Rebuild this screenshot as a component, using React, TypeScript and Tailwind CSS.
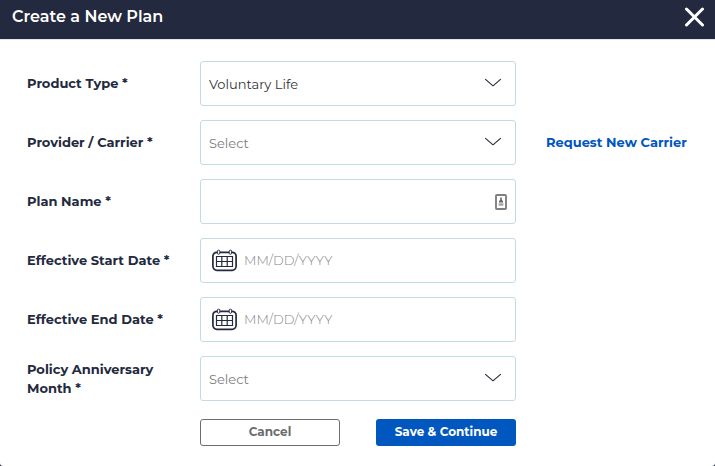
import type { ReactNode } from "react";

type RowProps = {
  id: string;
  label: string;
  children: ReactNode;
  action?: ReactNode;
};

const fieldClass =
  "h-[45px] w-full appearance-none rounded-[3px] border border-[#c3dbe3] bg-white text-[13px] outline-none focus:border-[#0057bf]";

function Row({ id, label, children, action }: RowProps) {
  return (
    <div className="grid grid-cols-[173px_minmax(0,1fr)_171px] items-center">
      <label htmlFor={id} className="pr-6 text-[13px] leading-[19px] font-bold text-[#23293e]">
        {label}
      </label>
      <div className="relative">{children}</div>
      {action && <div className="pl-[30px]">{action}</div>}
    </div>
  );
}

function Chevron() {
  return (
    <svg
      className="pointer-events-none absolute top-[17px] right-[14px] h-[9px] w-[18px]"
      viewBox="0 0 18 9"
      fill="none"
      stroke="#23293e"
      strokeWidth="1.1"
      strokeLinecap="round"
      strokeLinejoin="round"
    >
      <path d="M1.5 1.4 9 7.8l7.5-6.4" />
    </svg>
  );
}

function SelectField({ id, options, value }: { id: string; options: string[]; value?: string }) {
  return (
    <>
      <select
        id={id}
        defaultValue={value ?? ""}
        className={`${fieldClass} px-2 pt-0.5 pr-10 ${value ? "text-[#333333]" : "text-[#7c7c7c]"}`}
      >
        <option value="">Select</option>
        {options.map((option) => (
          <option key={option} value={option}>
            {option}
          </option>
        ))}
      </select>
      <Chevron />
    </>
  );
}

function DateField({ id }: { id: string }) {
  return (
    <>
      <svg
        className="pointer-events-none absolute top-[11px] left-[12px] h-[23px] w-[25px]"
        viewBox="0 0 25 23"
        fill="none"
        stroke="#23293e"
      >
        <rect x="0.9" y="3.3" width="23.2" height="18" rx="4" strokeWidth="1.7" />
        <path d="M4.5 7.5h16v10h-16zM9.8 7.5v10M15.2 7.5v10M4.5 12.5h16" strokeWidth="1.2" />
        <rect x="5.4" y="1.2" width="2.4" height="4" rx="1" fill="#fff" />
        <rect x="17.2" y="1.2" width="2.4" height="4" rx="1" fill="#fff" />
      </svg>
      <input
        id={id}
        type="text"
        placeholder="MM/DD/YYYY"
        className={`${fieldClass} pr-2 pb-0.5 pl-[43px] font-light text-[#3f3f3f] placeholder:text-[#858585]`}
      />
    </>
  );
}

const months = [
  "January",
  "February",
  "March",
  "April",
  "May",
  "June",
  "July",
  "August",
  "September",
  "October",
  "November",
  "December",
];

export default function App() {
  return (
    <div className="min-h-screen bg-[#23293e] font-[Montserrat,Inter,sans-serif]">
      <div className="flex min-h-screen flex-col overflow-hidden rounded-b-[3px] bg-white">
        <header className="flex h-10 items-center justify-between border-b border-[#dfe6ee] bg-[#23293e] pr-[10px] pb-[5px] pl-3">
          <h1 className="text-base font-semibold text-white">Create a New Plan</h1>
          <button type="button" aria-label="Close">
            <svg
              className="h-[21px] w-[21px]"
              viewBox="0 0 21 21"
              stroke="#fff"
              strokeWidth="3"
              strokeLinecap="round"
            >
              <path d="M2.5 2l16 16M18.5 2l-16 16" />
            </svg>
          </button>
        </header>

        <form className="pt-[21px] pr-7 pb-5 pl-[27px]" onSubmit={(e) => e.preventDefault()}>
          <div className="flex flex-col gap-[14px]">
            <Row id="product-type" label="Product Type *">
              <SelectField
                id="product-type"
                value="Voluntary Life"
                options={["Voluntary Life", "Basic Life", "Medical", "Dental", "Vision"]}
              />
            </Row>

            <Row
              id="carrier"
              label="Provider / Carrier *"
              action={
                <a
                  href="#request-carrier"
                  className="block text-[13px] leading-[19px] font-bold whitespace-nowrap text-[#0057bf]"
                >
                  Request New Carrier
                </a>
              }
            >
              <SelectField id="carrier" options={[]} />
            </Row>

            <Row id="plan-name" label="Plan Name *">
              <input id="plan-name" type="text" className={`${fieldClass} pr-8 pl-2 text-[#3f3f3f]`} />
              <svg
                className="pointer-events-none absolute top-[15px] right-[9px] h-4 w-3"
                viewBox="0 0 12 16"
                fill="none"
              >
                <rect x="1" y="1" width="10" height="14" rx="0.8" stroke="#808080" strokeWidth="1.9" />
                <path d="M5.2 3.5h1.6V6L8 7v1.5H4V7l1.2-1z" fill="#666" />
                <path d="M3.6 9.3h4.8v2.4H3.6z" fill="#a3a3a3" />
              </svg>
            </Row>

            <Row id="start-date" label="Effective Start Date *">
              <DateField id="start-date" />
            </Row>

            <Row id="end-date" label="Effective End Date *">
              <DateField id="end-date" />
            </Row>

            <Row id="anniversary" label="Policy Anniversary Month *">
              <SelectField id="anniversary" options={months} />
            </Row>
          </div>

          <div className="mt-[18px] mr-[171px] ml-[173px] flex justify-between gap-4">
            <button
              type="button"
              className="h-[27px] w-[140px] rounded-[3px] border border-[#6d6d6d] bg-white pb-px text-xs font-bold text-[#6d6d6d]"
            >
              Cancel
            </button>
            <button
              type="submit"
              className="h-[27px] w-[140px] rounded-[3px] bg-[#0057bf] pb-px text-xs font-bold whitespace-nowrap text-white"
            >
              Save &amp; Continue
            </button>
          </div>
        </form>
      </div>
    </div>
  );
}
